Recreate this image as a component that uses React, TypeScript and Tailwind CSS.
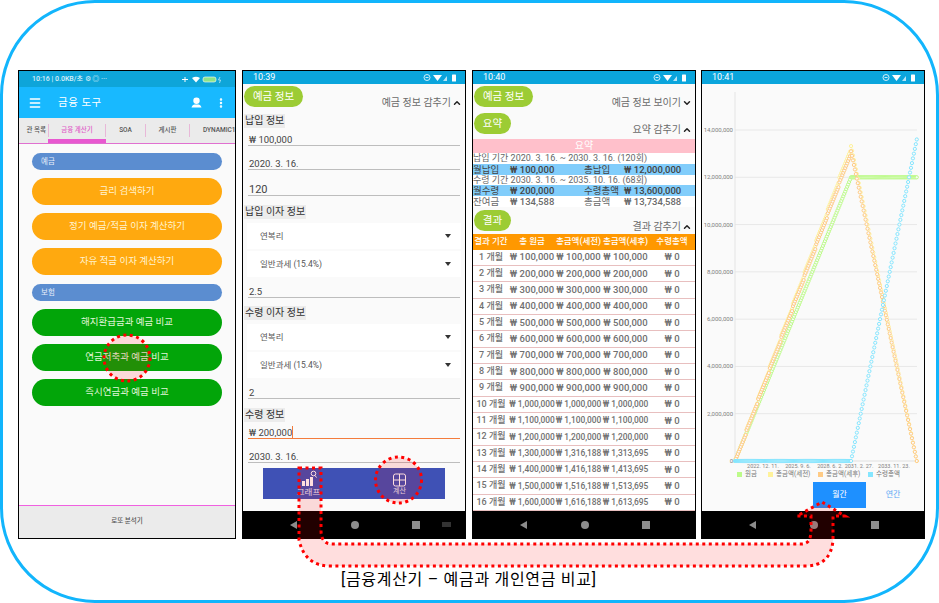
import { Menu, MoreVertical, ChevronUp, ChevronDown } from 'lucide-react'

const FONT = "font-['Roboto','Noto_Sans_CJK_KR',sans-serif]"

const won = (n: number) => `₩ ${n.toLocaleString('en-US')}`

function NavBar({ keyboard }: { keyboard?: boolean }) {
  return (
    <div className="relative h-[27px] shrink-0 bg-black flex items-center justify-center gap-[53px]">
      <svg width="9" height="10" viewBox="0 0 9 10"><path d="M8 1v8L1 5z" fill="#8c8c8c" /></svg>
      <span className="w-[8px] h-[8px] rounded-full bg-[#8c8c8c]" />
      <span className="w-[8px] h-[8px] bg-[#8c8c8c]" />
      {keyboard && <span className="absolute right-[14px] top-[11px] w-[9px] h-[5px] bg-[#333]" />}
    </div>
  )
}

function StatusBar({ time }: { time: string }) {
  return (
    <div className="h-[13px] shrink-0 bg-[#0ba5dc] flex items-center justify-between pl-[10px] pr-[8px] text-[9px] text-white">
      <span>{time}</span>
      <svg width="34" height="9" viewBox="0 0 34 9">
        <circle cx="4" cy="4.500" r="3" fill="none" stroke="#fff" strokeWidth="0.8" />
        <path d="M2.500 4.500h3" stroke="#fff" strokeWidth="0.8" />
        <path d="M10 2h9l-4.500 6z" fill="#fff" />
        <path d="M20 8l4-5v5z" fill="#fff" opacity="0.7" />
        <rect x="29" y="1.500" width="4" height="7" rx="0.6" fill="#fff" />
      </svg>
    </div>
  )
}

function Pill({ label, w }: { label: string; w: string }) {
  return (
    <div className={`${w} h-[21px] rounded-full bg-[#9ccc34] text-white text-[10.500px] flex items-center justify-center`}>
      {label}
    </div>
  )
}

function SectionHead({ label, toggle, open, w }: { label: string; toggle: string; open: boolean; w: string }) {
  return (
    <div className="flex items-start justify-between pl-[1px] pr-[3px]">
      <Pill label={label} w={w} />
      <div className="flex items-center gap-[1px] text-[10px] text-[#6a6a6a] mt-[10px] h-[13px]">
        {toggle}
        {open
          ? <ChevronUp size={10} strokeWidth={3.5} className="text-[#222]" />
          : <ChevronDown size={10} strokeWidth={3.5} className="text-[#222]" />}
      </div>
    </div>
  )
}

function Tag({ label }: { label: string }) {
  return <div className="self-start ml-[1px] h-[14px] px-[1px] bg-[#ececec] text-[10px] leading-[14px] text-[#333]">{label}</div>
}

function Field({ value, h, active, big }: { value: string; h: string; active?: boolean; big?: boolean }) {
  return (
    <div className={`${h} mx-[5px] flex items-end leading-[11px] text-[#444] border-b ${big ? 'text-[11px]' : 'text-[9.500px]'} ${active ? 'border-[#f47c3c]' : 'border-[#bdbdbd]'}`}>
      <span className="pl-[1px]">{value}</span>
      {active && <span className="w-[1px] h-[12px] bg-[#f47c3c]" />}
    </div>
  )
}

function Select({ value }: { value: string }) {
  return (
    <div className="h-[26px] mx-[4px] pl-[13px] pr-[10px] bg-white flex items-center justify-between text-[8.500px] text-[#555]">
      <span>{value}</span>
      <svg width="6" height="4" viewBox="0 0 6 4"><path d="M0 0h6L3 4z" fill="#333" /></svg>
    </div>
  )
}

function CalculatorScreen() {
  return (
    <div className="w-[218px] h-[469px] border border-black bg-[#fafafa] flex flex-col overflow-hidden shrink-0">
      <div className="h-[16px] shrink-0 bg-[#0ea5d9] flex items-center justify-between pl-[13px] pr-[13px] text-[7px] text-[#d8f0fa]">
        <span className="font-medium whitespace-nowrap">10:16 | 0.0KB/초 ⚙ ◎  ···</span>
        <svg width="40" height="7" viewBox="0 0 40 7">
          <path d="M0 3.500h6M3 1v5" stroke="#fff" strokeWidth="1" />
          <path d="M10 2q4-2.500 8 0l-4 4.500z" fill="#fff" />
          <rect x="21" y="1" width="13" height="5" rx="2" fill="#8fe388" stroke="#fff" strokeWidth="0.6" />
          <path d="M38 1l-1.500 3h2L37.500 7" stroke="#fff" strokeWidth="0.6" fill="none" />
        </svg>
      </div>
      <div className="h-[31px] shrink-0 bg-[#18b9ff] flex items-center pl-[9px] pr-[8px] text-white">
        <Menu size={14} strokeWidth={2.500} />
        <span className="ml-[16px] text-[10.500px] tracking-[0.500px]">금융 도구</span>
        <svg className="ml-auto mr-[13px]" width="11" height="11" viewBox="0 0 11 11">
          <path d="M5.500 0.500a3.200 3.200 0 0 1 3.200 3.400c0 1.800-1.400 3.100-3.200 3.100S2.300 5.700 2.300 3.900A3.200 3.200 0 0 1 5.500 0.500zM0.500 10.500c0.500-2 2-2.800 3-3h4c1 0.200 2.500 1 3 3z" fill="#fff" />
        </svg>
        <MoreVertical size={12} strokeWidth={3} />
      </div>
      <div className="h-[26px] shrink-0 bg-[#ebebeb] border-b border-[#e070d0] flex items-center text-[6.500px] font-medium text-[#555]">
        <span className="w-[29px] h-[13px] shrink-0 flex items-center justify-end pr-[2px] whitespace-nowrap overflow-hidden">관 목록</span>
        <div className="relative w-[58px] h-[13px] shrink-0 flex items-center justify-center text-[#e060c8] border-x border-[#e8b8d8]">
          금융 계산기
          <span className="absolute left-[-1px] right-[-1px] top-[15px] h-[4px] bg-[#e858d0]" />
        </div>
        <div className="w-[40px] h-[13px] shrink-0 flex items-center justify-center border-r border-[#e8b8d8]">SOA</div>
        <div className="w-[44px] h-[13px] shrink-0 flex items-center justify-center border-r border-[#e8b8d8]">게시판</div>
        <div className="pl-[13px] whitespace-nowrap">DYNAMIC1</div>
      </div>
      <div className="flex-1 px-[13px] pt-[9px] flex flex-col">
        <div className="h-[17px] rounded-full bg-[#5b8dd0] text-[#e8eefa] text-[7.500px] leading-[17px] pl-[9px]">예금</div>
        <div className="mt-[8px] flex flex-col gap-[8px]">
          {['금리 검색하기', '정기 예금/적금 이자 계산하기', '자유 적금 이자 계산하기'].map(t => (
            <div key={t} className="h-[27px] rounded-full bg-[#ffa90f] text-[#fff3d0] text-[9.500px] flex items-center justify-center">{t}</div>
          ))}
        </div>
        <div className="mt-[9px] h-[17px] rounded-full bg-[#5b8dd0] text-[#e8eefa] text-[7.500px] leading-[17px] pl-[9px]">보험</div>
        <div className="mt-[8px] flex flex-col gap-[8px]">
          {['해지환급금과 예금 비교', '연금저축과 예금 비교', '즉시연금과 예금 비교'].map(t => (
            <div key={t} className="h-[27px] rounded-full bg-[#02a509] text-[#e0f5d8] text-[9.500px] flex items-center justify-center">{t}</div>
          ))}
        </div>
      </div>
      <div className="h-[33px] shrink-0 bg-[#ebebeb] border-t border-[#f060e0] flex items-center justify-center text-[6.500px] text-[#555] font-medium">로또 분석기</div>
    </div>
  )
}

function DepositScreen() {
  return (
    <div className="relative w-[224px] h-[469px] border border-black bg-[#fafafa] flex flex-col overflow-hidden shrink-0">
      <StatusBar time="10:39" />
      <div className="flex-1 flex flex-col pt-[2px]">
        <SectionHead label="예금 정보" toggle="예금 정보 감추기" open w="w-[59px]" />
        <div className="h-[5px]" />
        <Tag label="납입 정보" />
        <Field value="₩ 100,000" h="h-[18px]" />
        <Field value="2020. 3. 16." h="h-[24px]" />
        <Field value="120" h="h-[26px]" big />
        <div className="h-[9px]" />
        <Tag label="납입 이자 정보" />
        <div className="h-[4px]" />
        <Select value="연복리" />
        <div className="h-[2px]" />
        <Select value="일반과세 (15.4%)" />
        <Field value="2.5" h="h-[21px]" />
        <div className="h-[8px]" />
        <Tag label="수령 이자 정보" />
        <div className="h-[4px]" />
        <Select value="연복리" />
        <div className="h-[2px]" />
        <Select value="일반과세 (15.4%)" />
        <Field value="2" h="h-[21px]" />
        <div className="h-[9px]" />
        <Tag label="수령 정보" />
        <Field value="₩ 200,000" h="h-[17px]" active />
        <Field value="2030. 3. 16." h="h-[24px]" />
      </div>
      <NavBar keyboard />
      <div className="absolute left-[20px] right-[20px] top-[397px] h-[31px] bg-[#3f51b5] flex text-[#e6e9f8]">
        <div className="w-[91px] flex flex-col items-center justify-end pb-[2px] text-[8.500px] leading-[10px]">
          <svg width="18" height="17" viewBox="0 0 18 17">
            <rect x="2" y="11" width="3" height="5" fill="#fff" />
            <rect x="6" y="9" width="3" height="7" fill="#fff" />
            <rect x="10" y="7" width="3" height="9" fill="#fff" />
            <circle cx="13.500" cy="3.500" r="2.300" fill="none" stroke="#fff" strokeWidth="1" />
            <path d="M15 5.500l1.500 2" stroke="#fff" strokeWidth="1" />
          </svg>
          그래프
        </div>
        <div className="flex-1 flex flex-col items-center justify-end pb-[3px] text-[7px] leading-[9px]">
          <svg width="15" height="14" viewBox="0 0 15 14">
            <rect x="1.500" y="1" width="12" height="12" rx="2" fill="none" stroke="#fff" strokeWidth="1" />
            <path d="M7.500 1v12M1.500 7h12" stroke="#fff" strokeWidth="1" />
          </svg>
          계산
        </div>
      </div>
    </div>
  )
}

function SummaryRow({ a, b, c, d, blue }: { a: string; b: string; c: string; d: string; blue?: boolean }) {
  return (
    <div className={`h-[11px] grid grid-cols-[37px_74px_37px_auto] items-center text-[9.500px] leading-[11px] whitespace-nowrap ${blue ? 'bg-[#81cdfb] text-[#444]' : 'bg-white text-[#6a6a6a]'}`}>
      <span>{a}</span><span className="font-medium">{b}</span><span>{c}</span><span className="pl-[3px] font-medium">{d}</span>
    </div>
  )
}

function ResultScreen() {
  const rows = Array.from({ length: 16 }, (_, i) => {
    const m = i + 1
    const base = m * 100000
    return { m, base, gross: m > 12 ? base + 16188 : base, net: m > 12 ? base + 13695 : base }
  })
  return (
    <div className="w-[224px] h-[469px] border border-black bg-[#fafafa] flex flex-col overflow-hidden shrink-0">
      <StatusBar time="10:40" />
      <div className="flex-1 flex flex-col pt-[2px] overflow-hidden">
        <SectionHead label="예금 정보" toggle="예금 정보 보이기" open={false} w="w-[59px]" />
        <div className="h-[6px]" />
        <SectionHead label="요약" toggle="요약 감추기" open w="w-[37px]" />
        <div className="h-[4px]" />
        <div className="h-[14px] bg-[#ffc0cb] text-white text-[10px] leading-[14px] text-center">요약</div>
        <div className="h-[11px] bg-white text-[9px] leading-[11px] text-[#666] whitespace-nowrap">납입 기간 2020. 3. 16. ~ 2030. 3. 16. (120회)</div>
        <SummaryRow a="월납입" b="₩ 100,000" c="총납입" d="₩ 12,000,000" blue />
        <div className="h-[10px] bg-white text-[9px] leading-[10px] text-[#666] whitespace-nowrap">수령 기간 2030. 3. 16. ~ 2035. 10. 16. (68회)</div>
        <SummaryRow a="월수령" b="₩ 200,000" c="수령총액" d="₩ 13,600,000" blue />
        <SummaryRow a="잔여금" b="₩ 134,588" c="총금액" d="₩ 13,734,588" />
        <div className="h-[5px]" />
        <SectionHead label="결과" toggle="결과 감추기" open w="w-[37px]" />
        <div className="h-[1px]" />
        <div className="h-[16px] shrink-0 bg-[#ff9800] text-white text-[8.500px] font-medium grid grid-cols-[36px_46px_47px_47px_auto] items-center text-center whitespace-nowrap">
          <span>결과 기간</span><span>총 원금</span><span>총금액(세전)</span><span>총금액(세후)</span><span>수령총액</span>
        </div>
        {rows.map(r => (
          <div key={r.m} className={`h-[16.340px] shrink-0 bg-white border-b border-[#e8bfbf] grid grid-cols-[36px_46px_47px_47px_auto] items-center text-center text-[#707070] font-medium whitespace-nowrap ${r.m > 9 ? 'text-[8.400px]' : 'text-[9.500px]'}`}>
            <span className="text-[9px]">{r.m} 개월</span>
            <span>{won(r.base)}</span>
            <span>{won(r.gross)}</span>
            <span>{won(r.net)}</span>
            <span className="text-[9.500px]">₩ 0</span>
          </div>
        ))}
      </div>
      <NavBar />
    </div>
  )
}

// chart coords are in the phone's own box (phone left = 701, top = 71)
const X0 = 33
const MONTH = 0.967
const yOf = (v: number) => 390 - (v / 14000000) * 331
const months = Array.from({ length: 189 }, (_, i) => i)

const SERIES = [
  { color: '#bdfb8a', val: (m: number) => Math.min(m, 120) * 100000 },
  { color: '#fff29a', val: (m: number) => (m <= 120 ? m * 100000 + Math.floor(m / 12) * 132000 : 13320000 * (1 - (m - 120) / 68)) },
  { color: '#ffcb85', val: (m: number) => (m <= 120 ? m * 100000 + Math.floor(m / 12) * 110000 : 13100000 * (1 - (m - 120) / 68)) },
  { color: '#85e6ff', val: (m: number) => (m <= 120 ? 0 : (m - 120) * 200000) },
]

function ChartScreen() {
  const grid = [14, 12, 10, 8, 6, 4, 2]
  const xLabels: [string, number][] = [['2022. 12. 11.', 61], ['2025. 9. 6.', 96], ['2028. 6. 2.', 128], ['2031. 2. 27.', 157], ['2033. 11. 23.', 192]]
  const legend = [['#bdfb8a', '원금', 'w-[20px]'], ['#fff29a', '총금액(세전)', 'w-[39px]'], ['#ffcb85', '총금액(세후)', 'w-[39px]'], ['#85e6ff', '수령총액', 'w-[24px]']]
  return (
    <div className="relative -ml-[1px] w-[224px] h-[469px] border border-black bg-[#fafafa] flex flex-col overflow-hidden shrink-0">
      <StatusBar time="10:41" />
      <div className="flex-1 relative">
        <svg width="222" height="388" viewBox="0 13 222 388" className="block">
          {grid.map(g => (
            <g key={g}>
              <line x1={X0} x2="215" y1={yOf(g * 1000000)} y2={yOf(g * 1000000)} stroke="#e8e8e8" strokeWidth="1" />
              <text x={31} y={yOf(g * 1000000) + 2} textAnchor="end" fontSize="6" fill="#808080" fontFamily="Roboto">{`${g},000,000`}</text>
            </g>
          ))}
          <line x1={X0} x2="215" y1="390" y2="390" stroke="#e0e0e0" />
          <line x1={X0} x2={X0} y1="21" y2="390" stroke="#e4e4e4" />
          <text x={31} y={392} textAnchor="end" fontSize="6" fill="#808080" fontFamily="Roboto">0</text>
          {SERIES.map(s => months.map(m => (
            <circle key={`${s.color}${m}`} cx={X0 + m * MONTH} cy={yOf(s.val(m))} r="1.600" fill="#fafafa" stroke={s.color} strokeWidth="1" />
          )))}
          {xLabels.map(([t, x]) => (
            <text key={t} x={x} y={397} textAnchor="middle" fontSize="5.500" fill="#808080" fontFamily="Roboto">{t}</text>
          ))}
        </svg>
        <div className="absolute left-[35px] top-[386px] flex items-center gap-[3px] text-[6.500px] leading-[8px] text-[#777] whitespace-nowrap">
          {legend.map(([c, t, w]) => (
            <div key={t} className="flex items-center gap-[3px]">
              <span className="w-[5px] h-[5px]" style={{ background: c }} />
              <span className={w}>{t}</span>
            </div>
          ))}
        </div>
        <div className="absolute left-[111px] top-[398px] flex items-center text-[8px]">
          <div className="w-[53px] h-[26px] bg-[#1e90ff] text-white flex items-center justify-center">월간</div>
          <div className="w-[54px] h-[26px] text-[#5aa9f5] flex items-center justify-center">연간</div>
        </div>
      </div>
      <NavBar />
    </div>
  )
}

export default function App() {
  return (
    <div className={`relative w-[939px] h-[603px] bg-white overflow-hidden ${FONT}`}>
      <div className="w-[939px] h-[603px] border-[3px] border-[#12b5fc] rounded-[95px] pt-[67px] pl-[15px] flex flex-col">
        <div className="flex gap-[6px]">
          <CalculatorScreen />
          <DepositScreen />
          <ResultScreen />
          <ChartScreen />
        </div>
        <div className="mt-[32px] pl-[323px] text-[16px] leading-[18px] tracking-[0.700px] text-black whitespace-nowrap">[금융계산기 – 예금과 개인연금 비교]</div>
      </div>

      {/* red dotted callouts drawn over the screens */}
      <svg width="939" height="603" viewBox="0 0 939 603" className="absolute inset-0 pointer-events-none">
        <g fill="#ff0000" fillOpacity="0.13" stroke="#ff0000" strokeWidth="3" strokeDasharray="3 3.500">
          <circle cx="127" cy="358" r="23" />
          <circle cx="398.500" cy="480" r="23" />
          <path d="M299 468H321V530Q321 544 332 544H802Q811 544 811 530V516H797L822 502L845 516H833V540Q831 566 805 566H330Q305 566 299 540Z" />
        </g>
      </svg>
    </div>
  )
}
